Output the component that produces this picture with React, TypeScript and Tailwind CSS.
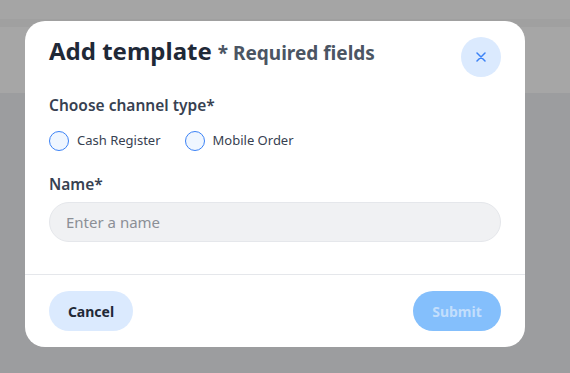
import React from "react";

export default function App() {
  const font = { fontFamily: '"Noto Sans", "Open Sans", sans-serif' };
  return (
    <div className="relative w-[570px] h-[373px] overflow-hidden bg-[#9c9d9f]" style={font}>
      <div className="flex flex-col">
        <div className="h-[19px] bg-[#a5a5a5]" />
        <div className="h-[8px] bg-[#a0a0a0]" />
        <div className="h-[66px] bg-[#a6a6a6]" />
      </div>
      <div className="absolute left-[25px] top-[21px] w-[500px] bg-white rounded-[20px] flex flex-col">
        <div className="flex items-start justify-between pl-6 pr-6 pt-4">
          <div className="flex items-baseline gap-[6px] -mt-[2px]">
            <span className="text-[24px] leading-[32px] font-bold text-[#1f2937]">Add template</span>
            <span className="text-[19px] font-bold text-[#4b5563]">* Required fields</span>
          </div>
          <button className="w-10 h-10 rounded-full bg-[#dbeafe] flex items-center justify-center">
            <svg width="10" height="10" viewBox="0 0 10 10" fill="none" stroke="#3b82f6" strokeWidth="1.5" strokeLinecap="round">
              <path d="M1 1 L9 9 M9 1 L1 9" />
            </svg>
          </button>
        </div>
        <div className="px-6 pt-[16px]">
          <div className="text-[15.5px] leading-[24px] font-semibold text-[#374151]">Choose channel type*</div>
          <div className="flex items-center gap-6 mt-[14px]">
            <label className="flex items-center gap-2">
              <span className="w-5 h-5 rounded-full border-[1.5px] border-[#3b82f6] bg-[#eff6ff]" />
              <span className="text-[13px] text-[#374151]">Cash Register</span>
            </label>
            <label className="flex items-center gap-2">
              <span className="w-5 h-5 rounded-full border-[1.5px] border-[#3b82f6] bg-[#eff6ff]" />
              <span className="text-[13px] text-[#374151]">Mobile Order</span>
            </label>
          </div>
          <div className="text-[15.5px] leading-[24px] font-semibold text-[#374151] mt-[21px]">Name*</div>
          <div className="mt-[6px] h-10 rounded-full bg-[#f0f1f3] border border-[#e5e7eb] flex items-center px-4">
            <span className="text-[15px] text-[#8b8f96]">Enter a name</span>
          </div>
        </div>
        <div className="mt-[32px] border-t border-[#e5e7eb] flex items-center justify-between px-6 pt-4 pb-4">
          <button className="h-10 w-[84px] rounded-full bg-[#dbeafe] text-[14px] font-bold text-[#1f2937]">Cancel</button>
          <button className="h-10 w-[88px] rounded-full bg-[#84bffc] text-[14px] font-bold text-[#c2defc]">Submit</button>
        </div>
      </div>
    </div>
  );
}
